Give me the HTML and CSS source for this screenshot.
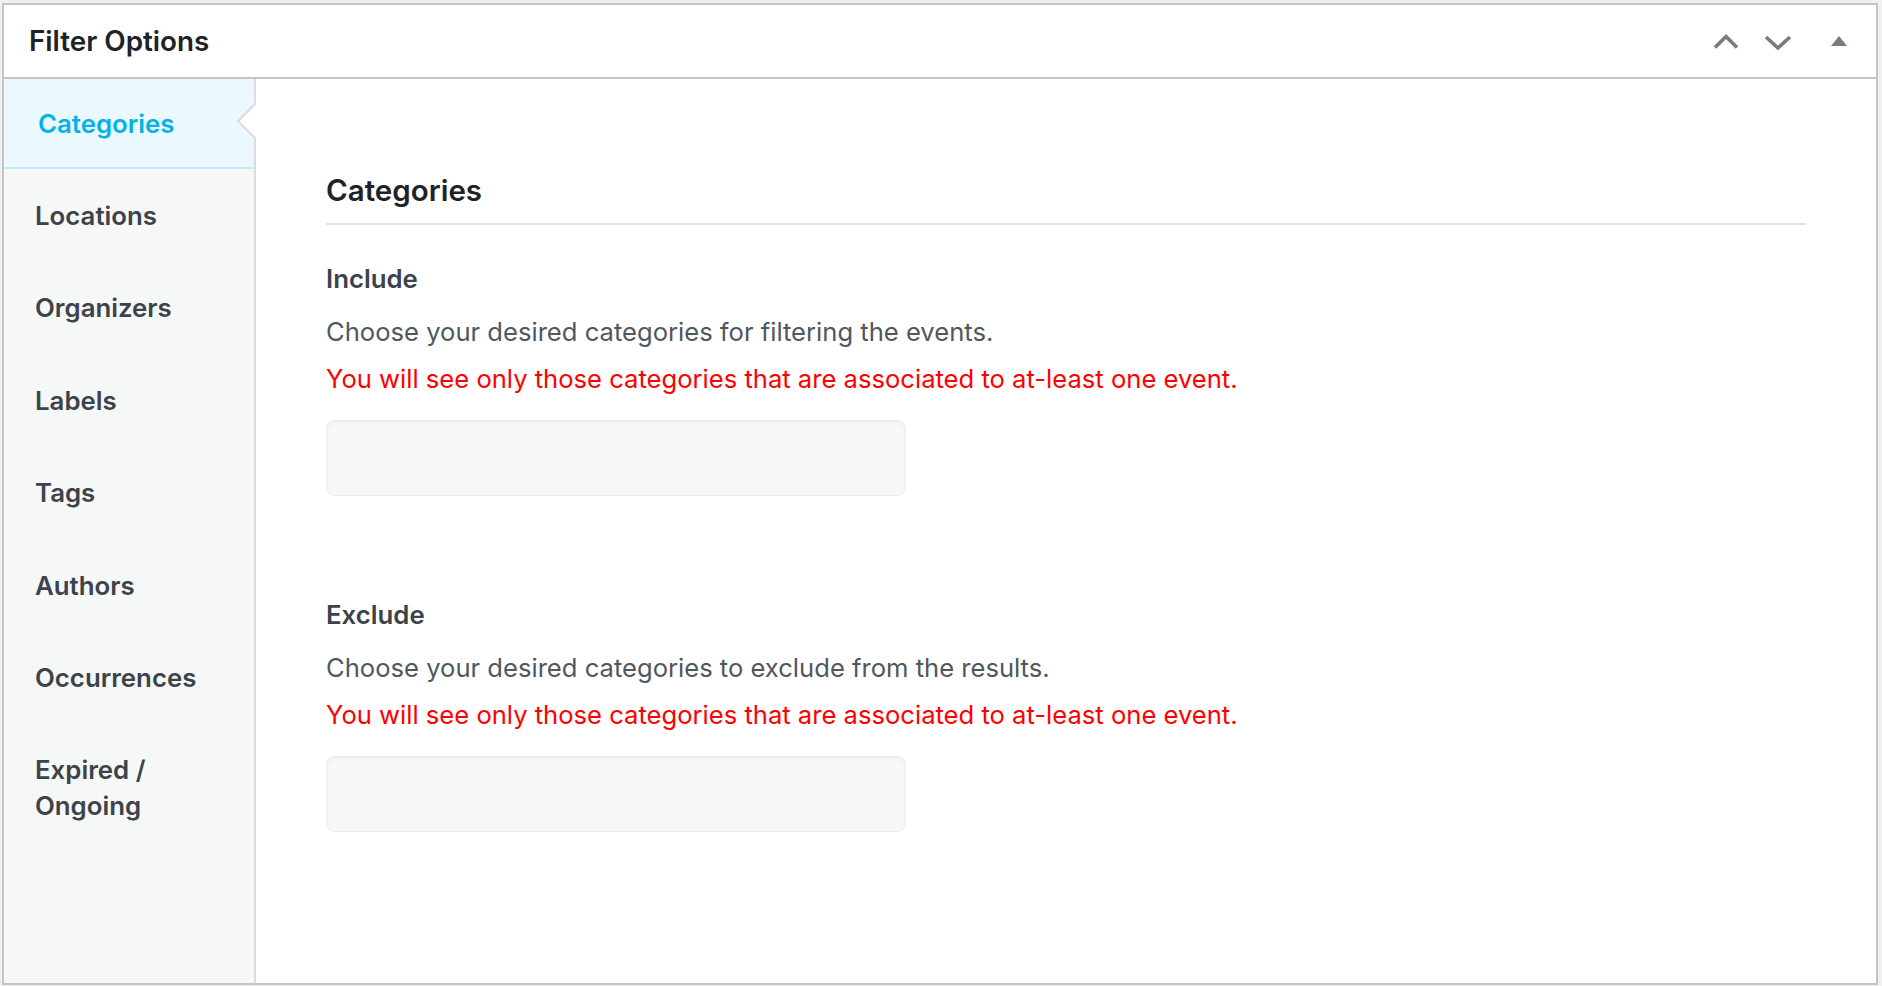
FILE: index.html
```html
<!DOCTYPE html>
<html lang="en">
<head>
    <meta charset="UTF-8">
    <meta name="viewport" content="width=device-width, initial-scale=1.0">
    <title>Filter Options</title>
    <link rel="stylesheet" href="styles.css">
</head>
<body>

<div class="postbox">
    <div class="postbox-header">
        <h2 class="postbox-title">Filter Options</h2>
        <div class="handle-actions">
            <button class="handle-btn btn-up" type="button" aria-label="Move up">
                <svg width="26" height="16" viewBox="0 0 26 16"><polyline points="2,14.5 13,3.5 24,14.5" fill="none" stroke="#787c82" stroke-width="3.6"/></svg>
            </button>
            <button class="handle-btn btn-down" type="button" aria-label="Move down">
                <svg width="28" height="15" viewBox="0 0 28 15"><polyline points="2,2 14,13 26,2" fill="none" stroke="#787c82" stroke-width="3.6"/></svg>
            </button>
            <button class="handle-btn btn-toggle" type="button" aria-label="Toggle panel">
                <svg width="16" height="10" viewBox="0 0 16 10"><polygon points="0,10 8,0 16,10" fill="#787c82"/></svg>
            </button>
        </div>
    </div>

    <div class="inside">
        <div class="tabs">
            <div class="tab active">Categories</div>
            <div class="tab">Locations</div>
            <div class="tab">Organizers</div>
            <div class="tab">Labels</div>
            <div class="tab">Tags</div>
            <div class="tab">Authors</div>
            <div class="tab">Occurrences</div>
            <div class="tab">Expired /<br>Ongoing</div>
        </div>

        <div class="tab-content">
            <h3 class="section-title">Categories</h3>

            <div class="field">
                <h4 class="field-label">Include</h4>
                <p class="field-desc">Choose your desired categories for filtering the events.</p>
                <p class="field-note">You will see only those categories that are associated to at-least one event.</p>
                <div class="select-box"></div>
            </div>

            <div class="field field-exclude">
                <h4 class="field-label">Exclude</h4>
                <p class="field-desc">Choose your desired categories to exclude from the results.</p>
                <p class="field-note">You will see only those categories that are associated to at-least one event.</p>
                <div class="select-box"></div>
            </div>
        </div>
    </div>
</div>

</body>
</html>
```

FILE: styles.css
```css
body {
    font-family: Inter, "Noto Sans", sans-serif;
    background-color: #f0f0f1;
    color: #3c434a;
    margin: 3px 4px 0 2px;
}
.postbox {
    background-color: #fff;
    border: 2px solid #c3c4c7;
    height: 982px;
    box-sizing: border-box;
    display: flex;
    flex-direction: column;
}
.postbox-header {
    height: 72px;
    border-bottom: 2px solid #c3c4c7;
    display: flex;
    align-items: center;
    padding-left: 25px;
}
.postbox-title {
    flex: 1;
    margin: 0;
    font-size: 27.8px;
    font-weight: 600;
    color: #1d2327;
}
.handle-actions {
    display: flex;
    height: 100%;
}
.handle-btn {
    background: none;
    border: 0;
    padding: 0;
    width: 52px;
    height: 100%;
    display: flex;
    align-items: center;
    justify-content: center;
    cursor: pointer;
}
.btn-up svg {
    margin-bottom: 1px;
}
.btn-down svg {
    margin-top: 2px;
}
.btn-toggle {
    width: 72px;
    padding-right: 2px;
}
.inside {
    flex: 1;
    display: flex;
}
.tabs {
    width: 250px;
    background-color: #f6f7f7;
    border-right: 2px solid #dcdcde;
}
.tab {
    padding: 28.2px 10px 28.2px 31px;
    font-size: 25.8px;
    font-weight: 600;
    line-height: 36px;
    color: #3c434a;
    cursor: pointer;
}
.tab:nth-child(2) {
    padding-top: 29px;
}
.tab.active {
    position: relative;
    padding: 27px 10px 25px 34px;
    background-color: #ebf8fd;
    border-bottom: 2px solid #c7ebf6;
    color: #00b3e6;
}
.tab.active::after {
    content: "";
    position: absolute;
    right: -14px;
    top: 29px;
    width: 24px;
    height: 24px;
    background-color: #fff;
    border-left: 2px solid #dcdcde;
    border-bottom: 2px solid #dcdcde;
    transform: rotate(45deg);
}
.tab-content {
    flex: 1;
    padding: 93px 70px 0;
}
.section-title {
    margin: 0;
    padding-bottom: 15px;
    border-bottom: 2px solid #e2e4e7;
    font-size: 29.5px;
    font-weight: 600;
    line-height: 36px;
    color: #1d2327;
}
.field {
    margin-top: 36px;
}
.field-exclude {
    margin-top: 101px;
}
.field-label {
    margin: 0;
    font-size: 25.8px;
    font-weight: 600;
    line-height: 36px;
    color: #3c434a;
}
.field-desc {
    margin: 17px 0 0;
    font-size: 25.6px;
    line-height: 36px;
    color: #50575e;
}
.field-note {
    margin: 11px 0 0;
    font-size: 25.6px;
    line-height: 36px;
    color: #ff0000;
}
.select-box {
    margin-top: 23px;
    width: 580px;
    height: 76px;
    box-sizing: border-box;
    background-color: #f6f7f8;
    border: 1px solid #ebebeb;
    border-radius: 9px;
    box-shadow: inset 0 2px 3px rgba(0, 0, 0, 0.04);
}
```
